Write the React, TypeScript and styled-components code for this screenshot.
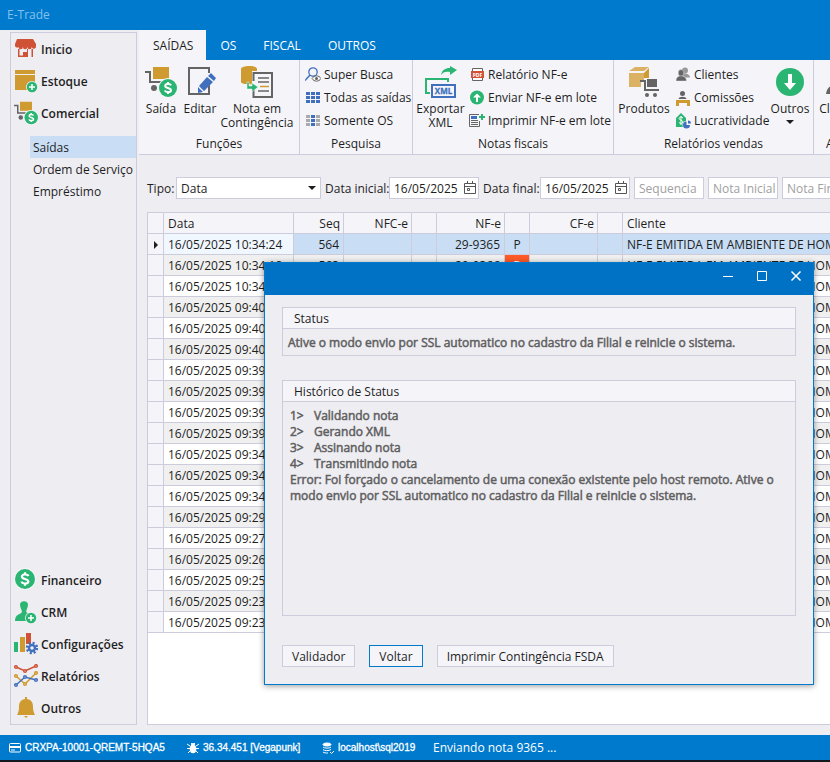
import React from "react";
import styled, { createGlobalStyle } from "styled-components";

const BLUE = "#007acc";
const LINE = "#ccccdc";
const BG = "#eeedf2";
const PANEL = "#f5f5f9";
const GREEN = "#2bb573";
const GOLD = "#cf9a2f";
const GRAY = "#646464";
const RED = "#d05236";
const INDIGO = "#4070bd";

const GlobalStyle = createGlobalStyle`
  * { box-sizing: border-box; }
  body { margin: 0; background: ${BG}; overflow: hidden; }
  body, button, input, select, textarea {
    font-family: "Open Sans", "Noto Sans", sans-serif;
    font-size: 12px;
    color: #1e1e1e;
  }
  button { cursor: pointer; }
`;

const Window = styled.div`
  position: relative;
  display: flex;
  flex-direction: column;
  height: 100vh;
  overflow: hidden;
  border-bottom: 2px solid #14191f;
`;

const TitleBar = styled.header`
  flex: none;
  height: 30px;
  padding-left: 7px;
  line-height: 30px;
  color: #84c2ee;
  background: ${BLUE};
`;

const Body = styled.div`
  flex: 1;
  display: flex;
  min-height: 0;
`;

const Sidebar = styled.nav`
  flex: none;
  display: flex;
  flex-direction: column;
  width: 127px;
  margin: 2px 2px 10px 10px;
  border: 1px solid ${LINE};
`;

const NavButton = styled.button`
  display: flex;
  align-items: center;
  gap: 3px;
  width: 100%;
  height: 32px;
  padding: 0 0 0 3px;
  border: 0;
  background: none;
  font-weight: 600;
  white-space: nowrap;
`;

const SubList = styled.div`
  padding: 7px 0 0 19px;
`;

const SubItem = styled.button<{ $active?: boolean }>`
  display: block;
  width: 100%;
  height: 22px;
  padding: 0 0 0 3px;
  border: 0;
  text-align: left;
  white-space: nowrap;
  background: ${(p) => (p.$active ? "#c9def5" : "none")};
`;

const Spacer = styled.div`
  flex: 1;
`;

const Main = styled.main`
  flex: 1;
  display: flex;
  flex-direction: column;
  min-width: 0;
  overflow: hidden;
`;

const Tabs = styled.div`
  flex: none;
  display: flex;
  height: 30px;
  background: ${BLUE};
`;

const Tab = styled.button<{ $active?: boolean }>`
  padding: 0 13px 0 14px;
  border: 0;
  color: ${(p) => (p.$active ? "#1e1e1e" : "#fff")};
  background: ${(p) => (p.$active ? PANEL : "none")};
`;

const Ribbon = styled.div`
  flex: none;
  display: flex;
  height: 95px;
  background: ${PANEL};
  border-bottom: 1px solid ${LINE};
`;

const Group = styled.section<{ $w: number }>`
  flex: none;
  display: flex;
  flex-direction: column;
  width: ${(p) => p.$w}px;
  padding-top: 3px;
  border-right: 1px solid ${LINE};
`;

const GroupBody = styled.div`
  flex: none;
  display: flex;
  height: 70px;
  padding: 0 4px 0 2px;
`;

const GroupLabel = styled.div`
  line-height: 22px;
  text-align: center;
`;

const BigButton = styled.button<{ $w: number }>`
  flex: none;
  display: flex;
  flex-direction: column;
  align-items: center;
  gap: 4px;
  width: ${(p) => p.$w}px;
  padding: 3px 0 0;
  border: 0;
  background: none;
  line-height: 14px;
  white-space: nowrap;
`;

const SmallList = styled.div`
  padding-left: 3px;
`;

const SmallButton = styled.button`
  display: flex;
  align-items: center;
  gap: 3px;
  height: 23px;
  padding: 0;
  border: 0;
  background: none;
  white-space: nowrap;
`;

const Filters = styled.form`
  flex: none;
  display: flex;
  align-items: center;
  gap: 4px;
  height: 22px;
  margin: 22px 0 13px 8px;
`;

const Field = styled.div`
  flex: none;
  display: flex;
  align-items: center;
  gap: 3px;
`;

const FieldLabel = styled.label<{ $w: number }>`
  width: ${(p) => p.$w}px;
  white-space: nowrap;
`;

const Box = styled.div<{ $w: number }>`
  flex: none;
  display: flex;
  align-items: center;
  width: ${(p) => p.$w}px;
  height: 22px;
  padding-right: 1px;
  border: 1px solid ${LINE};
  background: #fff;
`;

const Select = styled.select`
  flex: 1;
  min-width: 0;
  height: 20px;
  padding: 0 4px;
  border: 0;
  outline: 0;
  appearance: none;
  background: none;
`;

const Input = styled.input`
  flex: 1;
  width: 100%;
  min-width: 0;
  height: 20px;
  padding: 0 0 0 4px;
  border: 0;
  outline: 0;
  background: none;
  &::placeholder { color: #a0a0a0; }
`;

const IconButton = styled.button`
  display: flex;
  padding: 0;
  border: 0;
  background: none;
`;

const Sheet = styled.div`
  flex: 1;
  min-height: 0;
  margin: 0 0 10px 8px;
  overflow: hidden;
  border: 1px solid ${LINE};
  border-right: 0;
  background: #fff;
`;

const Table = styled.table`
  width: 780px;
  table-layout: fixed;
  border-collapse: separate;
  border-spacing: 0;
`;

const Th = styled.th<{ $right?: boolean }>`
  height: 21px;
  padding: 1px 3px 0 4px;
  border-right: 1px solid ${LINE};
  border-bottom: 1px solid ${LINE};
  background: ${PANEL};
  font-weight: 400;
  line-height: 19px;
  text-align: ${(p) => (p.$right ? "right" : "left")};
`;

type Tone = "plain" | "alt" | "selected" | "focus" | "head" | "alert";
const tones: Record<Tone, string> = {
  plain: "#fff",
  alt: "#f0f0f0",
  selected: "#c9def5",
  focus: "#f1f7fe",
  head: PANEL,
  alert: "#ff5a28",
};

const Td = styled.td<{ $tone: Tone; $align?: string }>`
  height: 21px;
  padding: 1px 4px 0;
  overflow: hidden;
  border-right: 1px solid ${LINE};
  border-bottom: 1px solid ${LINE};
  background: ${(p) => tones[p.$tone]};
  color: ${(p) => (p.$tone === "alert" ? "#fff" : "#1e1e1e")};
  line-height: 19px;
  text-align: ${(p) => p.$align ?? "left"};
  white-space: nowrap;
  svg { display: block; }
`;

const StatusBar = styled.footer`
  flex: none;
  display: flex;
  align-items: center;
  height: 25px;
  padding-left: 9px;
  color: #fff;
  background: ${BLUE};
`;

const StatusItem = styled.span<{ $w: number }>`
  flex: none;
  display: flex;
  align-items: center;
  gap: 4px;
  width: ${(p) => p.$w}px;
  font: 10px "Liberation Sans", sans-serif;
  -webkit-text-stroke: 0.3px #fff;
  white-space: nowrap;
`;

const Dialog = styled.div`
  position: absolute;
  top: 262px;
  left: 264px;
  right: 16px;
  border: 1px solid ${BLUE};
  background: ${BG};
  box-shadow: 0 1px 6px rgba(0, 0, 0, 0.4);
`;

const DialogBar = styled.div`
  display: flex;
  justify-content: flex-end;
  gap: 20px;
  height: 32px;
  padding: 6px 10px 0 0;
  background: #0072c6;
`;

const DialogBody = styled.div`
  padding: 12px 17px 17px;
`;

const Panel = styled.section`
  border: 1px solid ${LINE};
  margin-bottom: 24px;
`;

const PanelTitle = styled.h2`
  height: 21px;
  margin: 0;
  padding-left: 11px;
  border-bottom: 1px solid ${LINE};
  background: ${PANEL};
  font-size: 12px;
  font-weight: 400;
  line-height: 22px;
`;

const Message = styled.p`
  margin: 0;
  padding: 2px 0 0 5px;
  color: #5f5f5f;
  -webkit-text-stroke: 0.5px #5f5f5f;
  line-height: 24px;
  white-space: nowrap;
`;

const Log = styled.div`
  min-height: 213px;
  padding: 6px 3px 6px 7px;
  color: #5f5f5f;
  -webkit-text-stroke: 0.5px #5f5f5f;
  line-height: 16px;
`;

const Steps = styled.ol`
  margin: 0;
  padding: 0;
  list-style: none;
`;

const Step = styled.li`
  display: grid;
  grid-template-columns: 24px 1fr;
`;

const Actions = styled.div`
  display: flex;
  gap: 14px;
  margin-top: 29px;
`;

const ActionButton = styled.button<{ $focus?: boolean }>`
  height: 22px;
  padding: 0 9px;
  border: 1px solid ${(p) => (p.$focus ? BLUE : LINE)};
  background: ${PANEL};
`;

/* Drawing pieces */

const Coin = ({ x, y, r }: { x: number; y: number; r: number }) => (
  <g>
    <circle cx={x} cy={y} r={r + 1} fill={PANEL} />
    <circle cx={x} cy={y} r={r} fill={GREEN} />
    <g transform={`translate(${x} ${y}) scale(${r / 9})`} fill="none" stroke="#fff" strokeWidth="2">
      <path d="M3 -2.6C2.4 -4.6 -2.8 -4.6 -2.8 -2.1C-2.8 .3 3 -.3 3 2.2C3 4.7 -2.6 4.6 -3 2.4" />
      <path d="M0 -6V-4M0 4V6" />
    </g>
  </g>
);

const Plus = ({ x, y }: { x: number; y: number }) => (
  <g>
    <circle cx={x} cy={y} r="6" fill={BG} />
    <circle cx={x} cy={y} r="5.2" fill={GREEN} />
    <path d={`M${x - 3} ${y}h6M${x} ${y - 3}v6`} stroke="#fff" strokeWidth="1.5" />
  </g>
);

const Cart = ({ size = 32 }: { size?: number }) => (
  <svg width={size} height={size} viewBox="0 0 32 32">
    <rect x="8" y="1" width="16" height="12" fill={GOLD} />
    <path d="M0 6h5v10h12" fill="none" stroke={GRAY} strokeWidth="2" />
    <circle cx="9" cy="22" r="3" fill={GRAY} />
    <Coin x={23} y={22} r={9} />
  </svg>
);

const Shop = () => (
  <svg width="24" height="24" viewBox="0 0 24 24" fill={RED}>
    <path d="M3 2h16l3 5v2a2.2 2.2 0 0 1-4.3 1 2.2 2.2 0 0 1-4.4 0 2.2 2.2 0 0 1-4.4 0 2.2 2.2 0 0 1-4.4 0A2.2 2.2 0 0 1 1 9V7z" />
    <path d="M4 12h1.500v6.500h3.500V15h4.500v5H4zM13 12h1v8h-1zM17.500 12H19v8h-1.500z" />
  </svg>
);

const Stock = () => (
  <svg width="24" height="24" viewBox="0 0 24 24">
    <path d="M1 1h20v4H1zM1 6h20v15H1z" fill={GOLD} />
    <Plus x={18} y={18} />
  </svg>
);

const Finance = () => (
  <svg width="24" height="24" viewBox="0 0 24 24"><Coin x={11} y={11} r={10} /></svg>
);

const Crm = () => (
  <svg width="24" height="24" viewBox="0 0 24 24">
    <path d="M6 4.500C6 0 14 0 14 4.500C14 8 12 10 12.200 12C14 14 19 13 19 20V21H1C1 14 6 15 8 12C8 10 6 8 6 4.500z" fill={GREEN} />
    <Plus x={17} y={18} />
  </svg>
);

const Config = () => (
  <svg width="24" height="24" viewBox="0 0 24 24">
    <path d="M0 10h4v10H0z" fill={GREEN} />
    <path d="M6 5h5v15H6z" fill={GOLD} />
    <path d="M12 1h5v11h-5z" fill={RED} />
    <circle cx="18" cy="16" r="5" fill="none" stroke={INDIGO} strokeWidth="2.500" strokeDasharray="2 1.927" />
    <circle cx="18" cy="16" r="3" fill="none" stroke={INDIGO} strokeWidth="2.400" />
  </svg>
);

const Reports = () => (
  <svg width="24" height="24" viewBox="0 0 24 24" fill={BG} strokeWidth="1.500">
    <g stroke={RED}>
      <path d="M2 3L11 7L22 2" fill="none" />
      <circle cx="2" cy="3" r="1.300" /><circle cx="11" cy="7" r="1.300" /><circle cx="22" cy="2" r="1.300" />
    </g>
    <g stroke={GOLD}>
      <path d="M2 12L11 20L22 9" fill="none" />
      <circle cx="2" cy="12" r="1.300" /><circle cx="11" cy="20" r="1.300" /><circle cx="22" cy="9" r="1.300" />
    </g>
    <g stroke={INDIGO}>
      <path d="M2 21L11 13L22 16" fill="none" />
      <circle cx="2" cy="21" r="1.300" /><circle cx="11" cy="13" r="1.300" /><circle cx="22" cy="16" r="1.300" />
    </g>
  </svg>
);

const Bell = () => (
  <svg width="24" height="24" viewBox="0 0 24 24" fill={GOLD}>
    <path d="M11 1h2v2C18 4 19 7 19 11C19 15 20 17 21 19H3C4 17 5 15 5 11C5 7 6 4 11 3zM10 20h4l-2 2z" />
  </svg>
);

const Edit = () => (
  <svg width="32" height="32" viewBox="0 0 32 32">
    <path d="M25 7V2H5v26h20V19" fill="none" stroke={GRAY} strokeWidth="2" />
    <path d="M27 7l5 5-2 3-6-5zM23 11l6 5-9 9-5-5zM14 21l5 5-5 1z" fill={INDIGO} />
  </svg>
);

const Contingency = () => (
  <svg width="32" height="32" viewBox="0 0 32 32">
    <path d="M0 3C0-1 16-1 16 3V16C16 19 0 19 0 16z" fill={GOLD} />
    <path d="M11 5h22v28H11z" fill={PANEL} />
    <path d="M12.500 15V7H31v24H12.500V24" fill="none" stroke={GRAY} strokeWidth="2" />
    <path d="M17 12h11M17 16h11M17 25h11" stroke={GRAY} strokeWidth="1.500" />
    <path d="M19 20.500h9" stroke={GOLD} strokeWidth="1.500" />
    <path d="M6 16h2v4h3v-3l6 4-6 5v-3H6z" fill={GREEN} stroke={PANEL} strokeWidth=".5" />
  </svg>
);

const ExportXml = () => (
  <svg width="32" height="32" viewBox="0 0 32 32">
    <path d="M5 27H1V13h22v3" fill="none" stroke={GREEN} strokeWidth="2" />
    <path d="M16 9C17 4 20 2 25 2V0l7 4-7 5V6C21 5 18 6 16 9z" fill={GREEN} />
    <rect x="7" y="19" width="23" height="12" fill={PANEL} stroke={INDIGO} strokeWidth="2" />
    <text x="18.500" y="28" textAnchor="middle" fill={INDIGO} stroke={INDIGO} strokeWidth=".3" fontSize="8" fontWeight="700" fontFamily="Open Sans">XML</text>
  </svg>
);

const Products = () => (
  <svg width="32" height="32" viewBox="0 0 32 32">
    <path d="M1 7h12v14H1z" fill="#dbb164" />
    <path d="M1 5l6-4h14l-5 4z" fill="#dbb164" />
    <path d="M16 7l5-5v10h-5z" fill={GOLD} />
    <path d="M13 7h3v8h-3z" fill="#dbb164" />
    <path d="M19 13h10v8H19z" fill={GRAY} />
    <path d="M12 15h5v9h14" fill="none" stroke={GRAY} strokeWidth="2" />
    <circle cx="19" cy="29" r="2" fill={GRAY} /><circle cx="27" cy="29" r="2" fill={GRAY} />
  </svg>
);

const DownCircle = () => (
  <svg width="32" height="32" viewBox="0 0 32 32">
    <circle cx="16" cy="16" r="14" fill={GREEN} />
    <path d="M14 8h4v9h4l-6 7-6-7h4z" fill="#fff" />
  </svg>
);

const Person = () => (
  <svg width="32" height="32" viewBox="0 0 32 32"><path d="M0 28C1 20 7 18 15 18s14 4 14 10z" fill={GRAY} /><circle cx="16" cy="10" r="6" fill={GRAY} /></svg>
);

const Caret = () => (
  <svg width="14" height="4" viewBox="0 0 14 4"><path d="M3 0h8L7 4z" fill="#1e1e1e" /></svg>
);

const Search = () => (
  <svg width="16" height="16" viewBox="0 0 16 16" fill="none">
    <circle cx="8" cy="5" r="4.200" stroke={INDIGO} strokeWidth="1.300" />
    <path d="M5 8L0 13.500" stroke={INDIGO} strokeWidth="1.500" />
    <path d="M7 11.500C9 8 14 8 16 11.500C14 15 9 15 7 11.500z" fill={PANEL} stroke={GRAY} />
    <circle cx="11.500" cy="11.500" r="1.500" fill={GRAY} />
  </svg>
);

const GridIcon = ({ side = INDIGO }: { side?: string }) => (
  <svg width="16" height="16" viewBox="0 0 16 16">
    {[2, 6, 10].map((y) => (
      <g key={y}>
        <rect x="1" y={y} width="4" height="3" fill={side} />
        <rect x="6" y={y} width="4" height="3" fill={INDIGO} />
        <rect x="11" y={y} width="4" height="3" fill={side} />
      </g>
    ))}
  </svg>
);

const Pdf = () => (
  <svg width="16" height="16" viewBox="0 0 16 16">
    <path d="M3.500 1.500h10v12h-10z" fill="#fff" stroke={GRAY} />
    <path d="M2 4h13v7H2z" fill={RED} />
    <text x="8.500" y="9.500" textAnchor="middle" fill="#fff" fontSize="5" fontWeight="700" fontFamily="Open Sans">PDF</text>
  </svg>
);

const UpCircle = () => (
  <svg width="16" height="16" viewBox="0 0 16 16">
    <circle cx="8" cy="7.500" r="7" fill={GREEN} />
    <path d="M7 12V7.500H4L8 3.500l4 4H9V12z" fill="#fff" />
  </svg>
);

const PrintList = () => (
  <svg width="16" height="16" viewBox="0 0 16 16">
    <path d="M10 1.500H.500v12h10V8" fill="none" stroke={GRAY} />
    <path d="M2 3h6v3H2z" fill={INDIGO} />
    <path d="M2 7.500h7M2 9.500h7M2 11.500h7" stroke={GRAY} />
    <path d="M10 4h6M13 1v6" stroke={GREEN} strokeWidth="2" />
  </svg>
);

const People = () => (
  <svg width="16" height="16" viewBox="0 0 16 16">
    <g fill="#999"><circle cx="10" cy="3.500" r="3" /><path d="M7 6.500h4c3 1 4 2 4 4H9z" /></g>
    <g fill={GRAY} stroke={PANEL} strokeWidth=".4"><ellipse cx="6" cy="6" rx="2.800" ry="3.400" /><path d="M1 14C1 11 2 10 4.500 9h3C10 10 11.500 11 11.500 14z" /></g>
  </svg>
);

const Desk = () => (
  <svg width="16" height="16" viewBox="0 0 16 16">
    <circle cx="7.500" cy="3.500" r="2.500" fill={GRAY} />
    <path d="M3.500 9C4 6 11 6 11.500 9z" fill={GRAY} />
    <path d="M1 10h14v6h-3v-3H4v3H1z" fill={GOLD} />
  </svg>
);

const Profit = () => (
  <svg width="16" height="16" viewBox="0 0 16 16">
    <path d="M1 5l5-5 5 5v9H1z" fill={GREEN} />
    <path d="M8 5C7 3.500 4 4 4 5.500S8 7.500 8 9s-3 2-4 .500M6 3v9" fill="none" stroke="#fff" />
    <circle cx="11.500" cy="12" r="4" fill={PANEL} />
    <path d="M11.500 12V8.500a3.500 3.500 0 1 0 3.500 3.500zM13 7.500a3 3 0 0 1 3 3h-3z" fill={INDIGO} />
  </svg>
);

const Calendar = () => (
  <svg width="14" height="14" viewBox="0 0 14 14" fill="none" stroke="#555">
    <path d="M1.500 2.500h11v10h-11zM1.500 5.500h11M4.500 0v3M9.500 0v3M4.500 7.500h2v2h-2z" />
  </svg>
);

const Card = () => (
  <svg width="12" height="10" viewBox="0 0 12 10">
    <rect x=".5" y=".5" width="11" height="8.500" rx="1" fill="none" stroke="#fff" />
    <path d="M0 3h12v2H0z" fill="#fff" /><path d="M2 7h4" stroke="#fff" />
  </svg>
);

const Bug = () => (
  <svg width="12" height="12" viewBox="0 0 12 12">
    <path d="M0 2l3 2M0 6.500h12M1 11l2-2M12 2L9 4M11 11L9 9M4 1l1 1M8 1L7 2" stroke="#fff" />
    <ellipse cx="6" cy="7" rx="3.300" ry="4.200" fill="#fff" /><circle cx="6" cy="3" r="2" fill="#fff" />
  </svg>
);

const Database = () => (
  <svg width="12" height="12" viewBox="0 0 12 12" fill="none" stroke="#fff">
    <ellipse cx="5" cy="2.500" rx="4" ry="1.500" fill="#fff" />
    <path d="M1 5c1 1.500 7 1.500 8 0M1 7.500c1 1.500 6 1.500 8 0M1 10c1 1 3 1 5 1M8 10l1.500 1.500L12 9" />
  </svg>
);

const RowArrow = () => (
  <svg width="7" height="8" viewBox="0 0 7 8"><path d="M2 0l4 4-4 4z" fill="#1e1e1e" /></svg>
);

const topNav = [
  { label: "Inicio", icon: <Shop /> },
  { label: "Estoque", icon: <Stock /> },
  { label: "Comercial", icon: <Cart size={24} /> },
];
const bottomNav = [
  { label: "Financeiro", icon: <Finance /> },
  { label: "CRM", icon: <Crm /> },
  { label: "Configurações", icon: <Config /> },
  { label: "Relatórios", icon: <Reports /> },
  { label: "Outros", icon: <Bell /> },
];

const times = [
  "10:34:24", "10:34:18", "10:34:02", "09:40:51", "09:40:37", "09:40:12", "09:39:58",
  "09:39:44", "09:39:30", "09:39:11", "09:34:49", "09:34:32", "09:34:10", "09:29:45",
  "09:27:20", "09:26:33", "09:25:16", "09:23:52", "09:23:08",
];

const columns = [16, 130, 50, 68, 25, 68, 25, 68, 25];

const Small = ({ icon, children }: { icon: React.ReactNode; children: React.ReactNode }) => (
  <SmallButton type="button">{icon}{children}</SmallButton>
);

const DateField = ({ id, label, w }: { id: string; label: string; w: number }) => (
  <Field>
    <FieldLabel htmlFor={id} $w={w}>{label}</FieldLabel>
    <Box $w={90}>
      <Input id={id} defaultValue="16/05/2025" />
      <IconButton type="button" aria-label={`Abrir calendário, ${label}`}><Calendar /></IconButton>
    </Box>
  </Field>
);

export default function App() {
  return (
    <Window>
      <GlobalStyle />
      <TitleBar>E-Trade</TitleBar>
      <Body>
        <Sidebar>
          {topNav.map((n) => <NavButton key={n.label}>{n.icon}{n.label}</NavButton>)}
          <SubList>
            <SubItem $active>Saídas</SubItem>
            <SubItem>Ordem de Serviço</SubItem>
            <SubItem>Empréstimo</SubItem>
          </SubList>
          <Spacer />
          {bottomNav.map((n) => <NavButton key={n.label}>{n.icon}{n.label}</NavButton>)}
        </Sidebar>
        <Main>
          <Tabs>
            <Tab $active>SAÍDAS</Tab>
            <Tab>OS</Tab>
            <Tab>FISCAL</Tab>
            <Tab>OUTROS</Tab>
          </Tabs>
          <Ribbon>
            <Group $w={161}>
              <GroupBody>
                <BigButton $w={40}><Cart />Saída</BigButton>
                <BigButton $w={38}><Edit />Editar</BigButton>
                <BigButton $w={76}><Contingency /><span>Nota em<br />Contingência</span></BigButton>
              </GroupBody>
              <GroupLabel>Funções</GroupLabel>
            </Group>
            <Group $w={113}>
              <GroupBody>
                <SmallList>
                  <Small icon={<Search />}>Super Busca</Small>
                  <Small icon={<GridIcon />}>Todas as saídas</Small>
                  <Small icon={<GridIcon side="#aaa" />}>Somente OS</Small>
                </SmallList>
              </GroupBody>
              <GroupLabel>Pesquisa</GroupLabel>
            </Group>
            <Group $w={201}>
              <GroupBody>
                <BigButton $w={51}><ExportXml /><span>Exportar<br />XML</span></BigButton>
                <SmallList>
                  <Small icon={<Pdf />}>Relatório NF-e</Small>
                  <Small icon={<UpCircle />}>Enviar NF-e em lote</Small>
                  <Small icon={<PrintList />}>Imprimir NF-e em lote</Small>
                </SmallList>
              </GroupBody>
              <GroupLabel>Notas fiscais</GroupLabel>
            </Group>
            <Group $w={200}>
              <GroupBody>
                <BigButton $w={56}><Products />Produtos</BigButton>
                <SmallList>
                  <Small icon={<People />}>Clientes</Small>
                  <Small icon={<Desk />}>Comissões</Small>
                  <Small icon={<Profit />}>Lucratividade</Small>
                </SmallList>
                <Spacer />
                <BigButton $w={38}><DownCircle />Outros<Caret /></BigButton>
              </GroupBody>
              <GroupLabel>Relatórios vendas</GroupLabel>
            </Group>
            <Group $w={57}>
              <GroupBody>
                <BigButton $w={51}><Person />Clientes</BigButton>
              </GroupBody>
              <GroupLabel>Ajuda</GroupLabel>
            </Group>
          </Ribbon>
          <Filters>
            <Field>
              <FieldLabel htmlFor="tipo" $w={26}>Tipo:</FieldLabel>
              <Box $w={145}>
                <Select id="tipo" defaultValue="Data"><option>Data</option></Select>
                <Caret />
              </Box>
            </Field>
            <DateField id="inicio" label="Data inicial:" w={61} />
            <DateField id="fim" label="Data final:" w={54} />
            <Box $w={70}><Input aria-label="Sequencia" placeholder="Sequencia" /></Box>
            <Box $w={70}><Input aria-label="Nota Inicial" placeholder="Nota Inicial" /></Box>
            <Box $w={70}><Input aria-label="Nota Final" placeholder="Nota Final" /></Box>
          </Filters>
          <Sheet>
            <Table>
              <colgroup>
                {columns.map((w, i) => <col key={i} width={w} />)}
                <col />
              </colgroup>
              <thead>
                <tr>
                  <Th /><Th>Data</Th><Th $right>Seq</Th><Th $right>NFC-e</Th><Th />
                  <Th $right>NF-e</Th><Th /><Th $right>CF-e</Th><Th /><Th>Cliente</Th>
                </tr>
              </thead>
              <tbody>
                {times.map((time, i) => {
                  const tone: Tone = i === 0 ? "selected" : i % 2 ? "alt" : "plain";
                  return (
                    <tr key={time}>
                      <Td $tone="head">{i === 0 && <RowArrow />}</Td>
                      <Td $tone={i === 0 ? "focus" : tone}>16/05/2025 {time}</Td>
                      <Td $tone={tone} $align="right">{564 - i}</Td>
                      <Td $tone={tone} />
                      <Td $tone={tone} />
                      <Td $tone={tone} $align="right">{i === 0 ? "29-9365" : "29-9366"}</Td>
                      <Td $tone={i === 1 ? "alert" : tone} $align="center">{i === 1 ? "R" : "P"}</Td>
                      <Td $tone={tone} />
                      <Td $tone={tone} />
                      <Td $tone={tone}>NF-E EMITIDA EM AMBIENTE DE HOMOLOGACAO</Td>
                    </tr>
                  );
                })}
              </tbody>
            </Table>
          </Sheet>
        </Main>
      </Body>
      <StatusBar>
        <StatusItem $w={178}><Card />CRXPA-10001-QREMT-5HQA5</StatusItem>
        <StatusItem $w={135}><Bug />36.34.451 [Vegapunk]</StatusItem>
        <StatusItem $w={111}><Database />localhost\sql2019</StatusItem>
        <span>Enviando nota 9365 ...</span>
      </StatusBar>
      <Dialog role="dialog" aria-label="Status">
        <DialogBar>
          <IconButton aria-label="Minimizar"><svg width="14" height="14" viewBox="0 0 14 14"><path d="M2 7.500h10" stroke="#fff" /></svg></IconButton>
          <IconButton aria-label="Maximizar"><svg width="14" height="14" viewBox="0 0 14 14"><path d="M2.500 2.500h9v9h-9z" fill="none" stroke="#fff" /></svg></IconButton>
          <IconButton aria-label="Fechar"><svg width="14" height="14" viewBox="0 0 14 14"><path d="M2.500 2.500l9 9M11.500 2.500l-9 9" stroke="#fff" strokeWidth="1.500" /></svg></IconButton>
        </DialogBar>
        <DialogBody>
          <Panel>
            <PanelTitle>Status</PanelTitle>
            <Message>Ative o modo envio por SSL automatico no cadastro da Filial e reinicie o sistema.</Message>
          </Panel>
          <Panel>
            <PanelTitle>Histórico de Status</PanelTitle>
            <Log>
              <Steps>
                <Step><span>1&gt;</span>Validando nota</Step>
                <Step><span>2&gt;</span>Gerando XML</Step>
                <Step><span>3&gt;</span>Assinando nota</Step>
                <Step><span>4&gt;</span>Transmitindo nota</Step>
              </Steps>
              Error: Foi forçado o cancelamento de uma conexão existente pelo host remoto. Ative o modo envio por SSL automatico no cadastro da Filial e reinicie o sistema.
            </Log>
          </Panel>
          <Actions>
            <ActionButton>Validador</ActionButton>
            <ActionButton $focus>Voltar</ActionButton>
            <ActionButton>Imprimir Contingência FSDA</ActionButton>
          </Actions>
        </DialogBody>
      </Dialog>
    </Window>
  );
}
